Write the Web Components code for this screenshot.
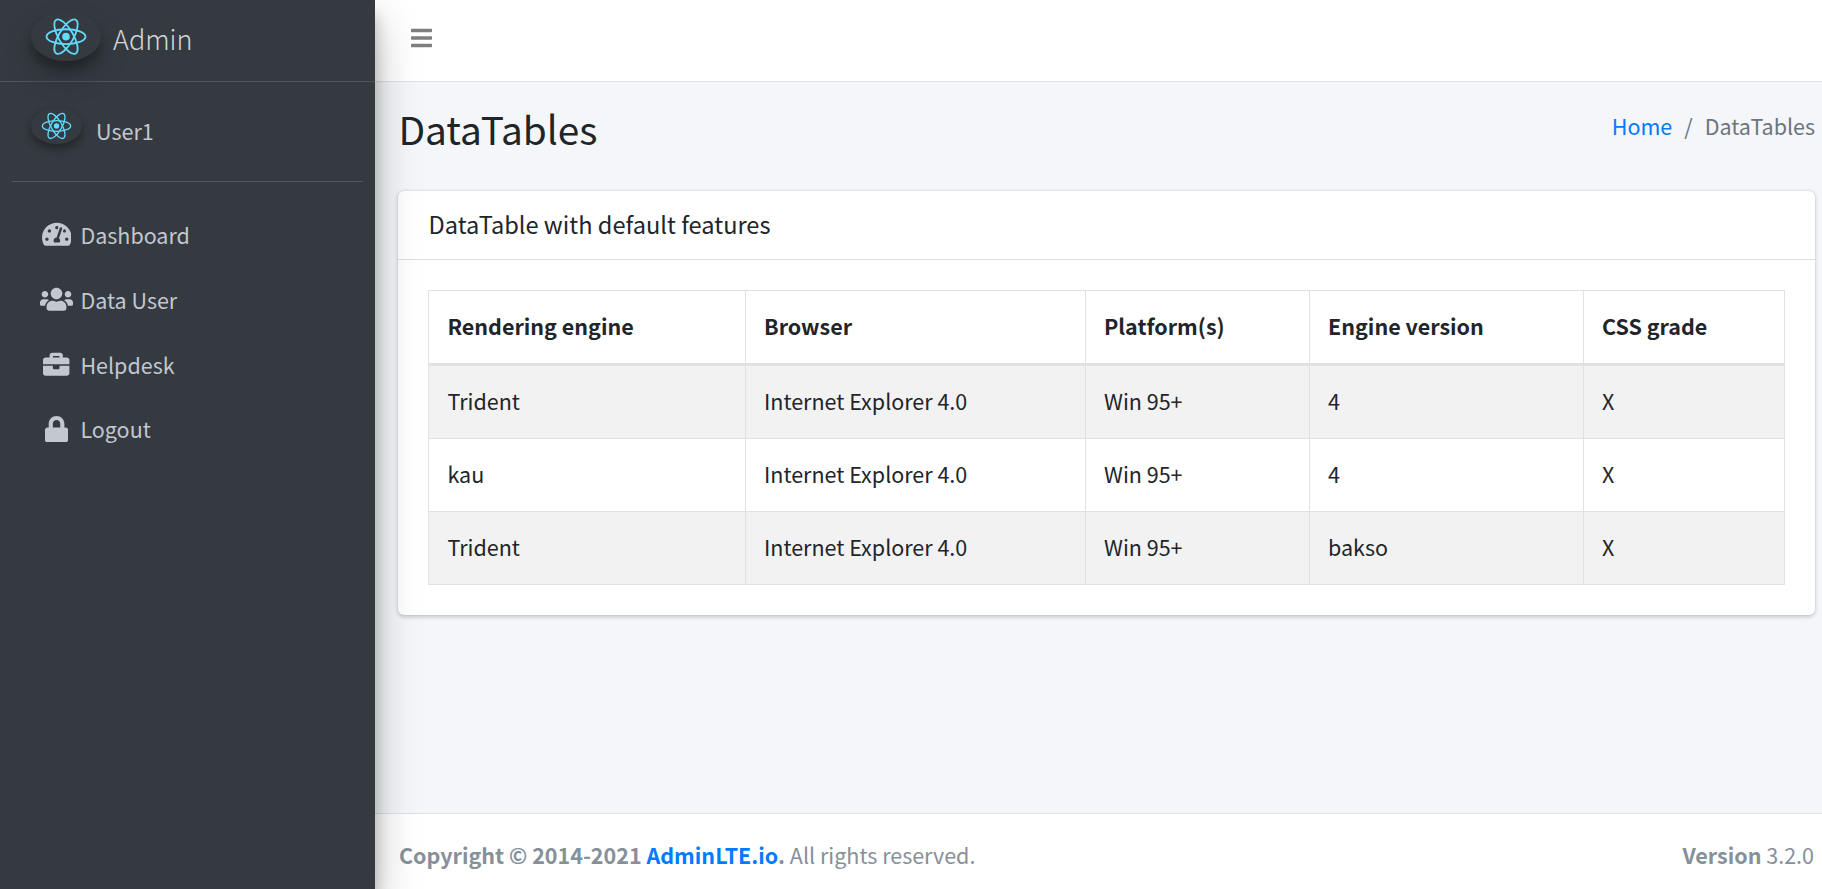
<!DOCTYPE html>
<html lang="en">
<head>
<meta charset="utf-8">
<title>DataTables</title>
<style>
html,body{margin:0;height:100%;overflow:hidden}
body{font-family:"Noto Sans CJK SC","Noto Sans CJK JP","Noto Sans",sans-serif;font-size:21.5px;line-height:36px;color:#212529;background:#f4f6f9}
</style>
</head>
<body>
<admin-app>
  <side-bar slot="side">
    <brand-link slot="brand">Admin</brand-link>
    <user-panel slot="user">User1</user-panel>
    <nav-item icon="dashboard">Dashboard</nav-item>
    <nav-item icon="users">Data User</nav-item>
    <nav-item icon="briefcase">Helpdesk</nav-item>
    <nav-item icon="lock">Logout</nav-item>
  </side-bar>
  <top-bar></top-bar>
  <page-header current="DataTables" parent="Home">DataTables</page-header>
  <data-card>
    <span slot="title">DataTable with default features</span>
    <data-table></data-table>
  </data-card>
  <page-footer></page-footer>
</admin-app>
<script>
const define = (name, html) => customElements.define(name, class extends HTMLElement {
  constructor() {
    super();
    this.attachShadow({mode: 'open'}).innerHTML = typeof html === 'function' ? html(this) : html;
  }
});

const ICONS = {
  bars: [448, 'M16 132h416c8.837 0 16-7.163 16-16V76c0-8.837-7.163-16-16-16H16C7.163 60 0 67.163 0 76v40c0 8.837 7.163 16 16 16zm0 160h416c8.837 0 16-7.163 16-16v-40c0-8.837-7.163-16-16-16H16c-8.837 0-16 7.163-16 16v40c0 8.837 7.163 16 16 16zm0 160h416c8.837 0 16-7.163 16-16v-40c0-8.837-7.163-16-16-16H16c-8.837 0-16 7.163-16 16v40c0 8.837 7.163 16 16 16z'],
  dashboard: [576, 'M288 32C128.94 32 0 160.94 0 320c0 52.8 14.25 102.26 39.06 144.8 5.61 9.62 16.3 15.2 27.44 15.2h443c11.14 0 21.83-5.58 27.44-15.2C561.75 422.26 576 372.8 576 320c0-159.06-128.94-288-288-288zm0 64c14.71 0 26.58 10.13 30.32 23.65-1.11 2.26-2.64 4.23-3.45 6.67l-9.22 27.67c-5.13 3.49-10.97 6.01-17.64 6.01-17.67 0-32-14.33-32-32S270.33 96 288 96zM96 384c-17.67 0-32-14.33-32-32s14.33-32 32-32 32 14.33 32 32-14.33 32-32 32zm48-160c-17.67 0-32-14.33-32-32s14.33-32 32-32 32 14.33 32 32-14.33 32-32 32zm246.77-72.41l-61.33 184C343.13 347.33 352 364.54 352 384c0 11.72-3.38 22.55-8.88 32H232.88c-5.5-9.45-8.88-20.28-8.88-32 0-33.94 26.5-61.43 59.9-63.59l61.34-184.01c4.17-12.56 17.73-19.45 30.36-15.17 12.57 4.19 19.35 17.79 15.17 30.36zm14.66 57.2l15.52-46.55c3.47-1.29 7.13-2.23 11.05-2.23 17.67 0 32 14.33 32 32s-14.33 32-32 32c-11.38-.01-20.89-6.28-26.57-15.22zM480 384c-17.67 0-32-14.33-32-32s14.33-32 32-32 32 14.33 32 32-14.33 32-32 32z'],
  users: [640, 'M96 224c35.3 0 64-28.7 64-64s-28.7-64-64-64-64 28.7-64 64 28.7 64 64 64zm448 0c35.3 0 64-28.7 64-64s-28.7-64-64-64-64 28.7-64 64 28.7 64 64 64zm32 32h-64c-17.6 0-33.5 7.1-45.1 18.6 40.3 22.1 68.9 62 75.1 109.4h66c17.7 0 32-14.3 32-32v-32c0-35.3-28.7-64-64-64zm-256 0c61.9 0 112-50.1 112-112S381.9 32 320 32 208 82.1 208 144s50.1 112 112 112zm76.8 32h-8.3c-20.8 10-43.9 16-68.5 16s-47.6-6-68.5-16h-8.3C179.6 288 128 339.6 128 403.2V432c0 26.5 21.5 48 48 48h288c26.5 0 48-21.5 48-48v-28.8c0-63.6-51.6-115.2-115.2-115.2zm-223.7-13.4C161.5 263.1 145.6 256 128 256H64c-35.3 0-64 28.7-64 64v32c0 17.7 14.3 32 32 32h65.9c6.3-47.4 34.9-87.3 75.2-109.4z'],
  briefcase: [512, 'M320 336c0 8.84-7.16 16-16 16h-96c-8.84 0-16-7.16-16-16v-48H0v144c0 25.6 22.4 48 48 48h416c25.6 0 48-22.4 48-48V288H320v48zm144-208h-80V80c0-25.6-22.4-48-48-48H176c-25.6 0-48 22.4-48 48v48H48c-25.6 0-48 22.4-48 48v80h512v-80c0-25.6-22.4-48-48-48zm-144 0H192V96h128v32z'],
  lock: [448, 'M400 224h-24v-72C376 68.2 307.8 0 224 0S72 68.2 72 152v72H48c-26.5 0-48 21.5-48 48v192c0 26.5 21.5 48 48 48h352c26.5 0 48-21.5 48-48V272c0-26.5-21.5-48-48-48zm-104 0H152v-72c0-39.7 32.3-72 72-72s72 32.3 72 72v72z']
};
const icon = (name, size) => {
  const [w, d] = ICONS[name];
  return `<svg width="${w / 512 * size}" height="${size}" viewBox="0 0 ${w} 512" fill="currentColor"><path d="${d}"/></svg>`;
};

define('react-logo', `<style>
:host{display:block;flex:none;border-radius:50%}
svg{display:block;width:100%;height:100%}
</style><svg viewBox="0 0 841.9 595.3"><g fill="none" stroke="#61dafb" stroke-width="22">
<ellipse cx="420.9" cy="296.5" rx="234" ry="89"/>
<ellipse cx="420.9" cy="296.5" rx="234" ry="89" transform="rotate(60 420.9 296.5)"/>
<ellipse cx="420.9" cy="296.5" rx="234" ry="89" transform="rotate(120 420.9 296.5)"/></g>
<circle cx="420.9" cy="296.5" r="45.7" fill="#61dafb"/></svg>`);

define('admin-app', `<style>
:host{display:grid;grid-template-columns:375px 1fr;height:100vh}
main{display:flex;flex-direction:column;min-width:0}
::slotted([slot=side]){position:relative;z-index:2}
::slotted(page-footer){margin-top:auto}
</style><slot name="side"></slot><main><slot></slot></main>`);

define('side-bar', `<style>
:host{display:block;background:#343a40;color:#c2c7d0;box-shadow:0 21px 42px rgba(0,0,0,.25),0 15px 15px rgba(0,0,0,.22)}
nav{display:flex;flex-direction:column;gap:4.8px;padding:23px 12px 0}
</style><slot name="brand"></slot><slot name="user"></slot><nav><slot></slot></nav>`);

define('brand-link', `<style>
:host{display:flex;align-items:flex-start;height:81px;border-bottom:1px solid #4b545c;padding-left:31px;font-size:27px;font-weight:300;color:rgba(255,255,255,.8)}
react-logo{width:70px;height:49.5px;margin-top:11.5px;box-shadow:0 15px 30px rgba(0,0,0,.19),0 9px 9px rgba(0,0,0,.23)}
span{margin:21px 0 0 12px}
</style><react-logo></react-logo><span><slot></slot></span>`);

define('user-panel', `<style>
:host{display:flex;align-items:flex-start;height:99px;margin:0 12px;padding-left:19px;border-bottom:1px solid #4f5962}
react-logo{width:51px;height:36px;margin-top:26px;box-shadow:0 4.5px 9px rgba(0,0,0,.16),0 4.5px 9px rgba(0,0,0,.23)}
span{margin:31px 0 0 14px}
</style><react-logo></react-logo><span><slot></slot></span>`);

define('nav-item', el => `<style>
:host{display:flex;align-items:center;height:60px;padding-left:24.4px}
i{display:flex;justify-content:center;width:40px;margin:-1px 4px 0 0}
svg{display:block;flex:none}
</style><i>${icon(el.getAttribute('icon'), 26.4)}</i><span><slot></slot></span>`);

define('top-bar', `<style>
:host{display:flex;align-items:center;box-sizing:border-box;height:82px;background:#fff;border-bottom:1px solid #dee2e6;padding:0 36px 5px;color:rgba(0,0,0,.5)}
svg{display:block}
</style>${icon('bars', 24)}`);

define('page-header', el => `<style>
:host{display:flex;justify-content:space-between;align-items:flex-start;height:109px;padding:0 7px 0 23.4px}
h1{margin:20px 0 0;font-size:38.8px;font-weight:400;line-height:52px}
ol{display:flex;list-style:none;margin:26px 0 0;padding:0;color:#6c757d}
a{color:#007bff}
li+li::before{content:"/";padding:0 12px}
</style><h1><slot></slot></h1><ol><li><a>${el.getAttribute('parent')}</a></li><li>${el.getAttribute('current')}</li></ol>`);

define('data-card', `<style>
:host{display:block;margin:0 7px 0 23px;background:#fff;border-radius:6px;box-shadow:0 0 1.5px rgba(0,0,0,.125),0 1.5px 4.5px rgba(0,0,0,.2)}
header{box-sizing:border-box;height:69px;padding:15px 30px 0 30.5px;border-bottom:1px solid rgba(0,0,0,.125);font-size:23.62px}
section{padding:30px}
</style><header><slot name="title"></slot></header><section><slot></slot></section>`);

const HEAD = ['Rendering engine', 'Browser', 'Platform(s)', 'Engine version', 'CSS grade'];
const ROWS = [
  ['Trident', 'Internet Explorer 4.0', 'Win 95+', '4', 'X'],
  ['kau', 'Internet Explorer 4.0', 'Win 95+', '4', 'X'],
  ['Trident', 'Internet Explorer 4.0', 'Win 95+', 'bakso', 'X']
];
define('data-table', `<style>
:host{display:block}
table{width:100%;table-layout:fixed;border-spacing:0;border:solid #dee2e6;border-width:1px 0 0 1px}
th,td{padding:17px 18px 19px;text-align:left;border:solid #dee2e6;border-width:0 1px 1px 0;white-space:nowrap}
th:first-child,td:first-child{padding-left:18.4px}
th{font-weight:700;border-bottom-width:3px}
tbody tr:nth-child(odd){background:#f2f2f2}
</style><table><colgroup><col style="width:317px"><col style="width:340px"><col style="width:224px"><col style="width:274px"><col></colgroup>
<thead><tr>${HEAD.map(h => `<th>${h}</th>`).join('')}</tr></thead>
<tbody>${ROWS.map(r => `<tr>${r.map(c => `<td>${c}</td>`).join('')}</tr>`).join('')}</tbody></table>`);

define('page-footer', `<style>
:host{display:flex;justify-content:space-between;box-sizing:border-box;height:76px;padding:23px 8px 0 24px;background:#fff;border-top:1px solid #dee2e6;color:#869099}
a{color:#007bff}
</style><span><strong>Copyright © 2014-2021 <a>AdminLTE.io</a>.</strong> All rights reserved.</span><span><b>Version</b> 3.2.0</span>`);
</script>
</body>
</html>
